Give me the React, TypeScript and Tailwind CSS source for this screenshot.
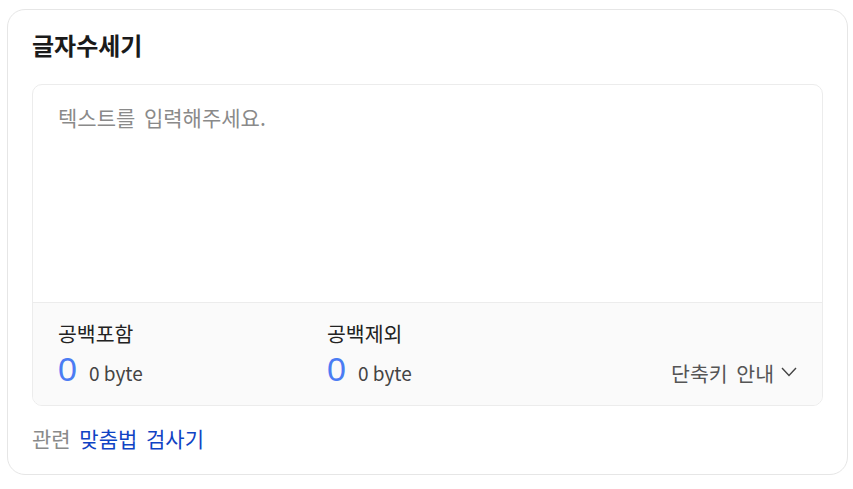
import React, { useState } from "react";

const countBytes = (s: string) => new TextEncoder().encode(s).length;

const ChevronDown: React.FC = () => (
  <svg width="16" height="10" viewBox="0 0 16 10" fill="none" className="ml-[7px] mb-[3px]">
    <polyline points="1,1 8,8.5 15,1" stroke="#444" strokeWidth="1.4" fill="none" />
  </svg>
);

const Stat: React.FC<{ label: string; count: number; bytes: number; className?: string }> = ({
  label,
  count,
  bytes,
  className,
}) => (
  <div className={className}>
    <div className="text-[20.5px] leading-[26px] text-[#222]">{label}</div>
    <div className="flex items-baseline mt-[4px]">
      <span className="text-[34px] leading-[38px] text-[#4b7cf3] font-['Liberation_Sans',sans-serif]">
        {count}
      </span>
      <span className="ml-[12px] text-[19px] text-[#444]">{bytes} byte</span>
    </div>
  </div>
);

export default function App() {
  const [text, setText] = useState("");
  const noSpace = text.replace(/\s/g, "");

  return (
    <div
      className="bg-white min-h-screen pl-[7px] pt-[9px]"
      style={{ fontFamily: '"Noto Sans CJK KR", "Noto Sans", sans-serif' }}
    >
      <div className="w-[841px] h-[466px] rounded-[18px] border border-[#e6e6e6] bg-white px-[24px] pt-[18px]">
        <h1 className="text-[24px] leading-[34px] font-bold text-[#1a1a1a]">글자수세기</h1>

        <div className="mt-[22px] rounded-[10px] border border-[#ececec] overflow-hidden">
          <textarea
            value={text}
            onChange={(e) => setText(e.target.value)}
            placeholder="텍스트를 입력해주세요."
            className="block w-full h-[217px] resize-none px-[25px] pt-[17px] text-[21px] leading-[30px] [word-spacing:4px] text-[#222] placeholder:text-[#8a8a8a] outline-none"
          />
          <div className="flex items-end border-t border-[#ececec] bg-[#fafafa] px-[25px] pt-[17px] pb-[17px]">
            <Stat label="공백포함" count={text.length} bytes={countBytes(text)} className="w-[269px]" />
            <Stat label="공백제외" count={noSpace.length} bytes={countBytes(noSpace)} />
            <button className="ml-auto flex items-center text-[20.5px] leading-[28px] [word-spacing:4px] text-[#555] mb-[1px]">
              단축키 안내
              <ChevronDown />
            </button>
          </div>
        </div>

        <div className="mt-[17px] text-[21px] leading-[30px] [word-spacing:4px]">
          <span className="text-[#8a8a8a]">관련</span>{" "}
          <a href="#" className="text-[#0f43c4]">
            맞춤법 검사기
          </a>
        </div>
      </div>
    </div>
  );
}
